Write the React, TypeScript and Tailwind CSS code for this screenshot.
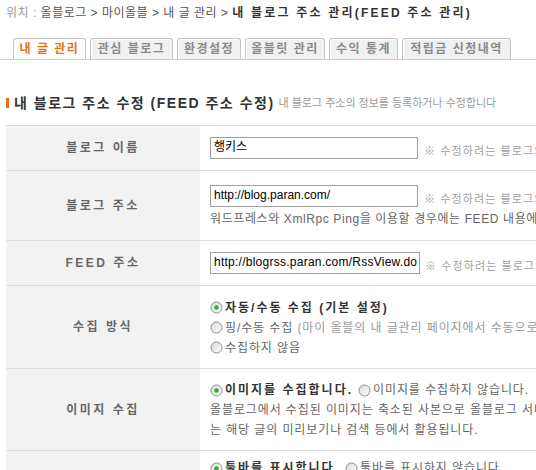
import React from "react";

function Radio({ checked }: { checked?: boolean }) {
  return (
    <svg width="13" height="13" viewBox="0 0 13 13" className="shrink-0 mr-[2px]">
      <defs>
        <linearGradient id="rg" x1="0" y1="0" x2="1" y2="1">
          <stop offset="0" stopColor="#d9d9d9" />
          <stop offset="1" stopColor="#ffffff" />
        </linearGradient>
      </defs>
      <circle cx="6.5" cy="6.5" r="5.5" fill="url(#rg)" stroke="#8d8d8d" strokeWidth="1" />
      {checked && <circle cx="6.5" cy="6.5" r="2.3" fill="#2eae2e" />}
    </svg>
  );
}

function Row({ label, h, children }: { label: string; h: string; children: React.ReactNode }) {
  return (
    <div className={`flex border-b border-[#dddddd] ${h}`}>
      <div className="w-[194px] shrink-0 bg-[#f2f2f2] flex items-center justify-center text-[12px] font-bold text-[#666] tracking-[2.5px]">
        {label}
      </div>
      <div className="flex-1 pl-[10px] flex flex-col justify-center">{children}</div>
    </div>
  );
}

const tabs = [
  { t: "내 글 관리", w: "w-[73px]", active: true },
  { t: "관심 블로그", w: "w-[83px]" },
  { t: "환경설정", w: "w-[64px]" },
  { t: "올블릿 관리", w: "w-[80px]" },
  { t: "수익 통계", w: "w-[69px]" },
  { t: "적립금 신청내역", w: "w-[109px]" },
];

export default function App() {
  return (
    <div className="w-[536px] h-[470px] overflow-hidden bg-white font-['Liberation_Sans','Noto_Sans_CJK_KR',sans-serif]">
      <div className="w-[900px]">
        <div className="pl-[6px] pt-[5px] h-[21px] leading-[16px] text-[12px] whitespace-nowrap tracking-[0.5px]">
          <span className="text-[#999]">위치 : </span>
          <span className="text-[#555]">올블로그 &gt; 마이올블 &gt; 내 글 관리 &gt; </span>
          <b className="text-[#333] tracking-[2.2px]">내 블로그 주소 관리(FEED 주소 관리)</b>
        </div>

        <div className="mt-[17px] flex items-end gap-[4px] pl-[13px] border-b border-[#cccccc] h-[22px]">
          {tabs.map((tb) => (
            <div
              key={tb.t}
              className={`${tb.w} h-[21px] border border-b-0 border-[#c6c6c6] rounded-t-[3px] flex items-center justify-center text-[12px] font-bold tracking-[1.5px] whitespace-nowrap ${
                tb.active
                  ? "bg-white text-[#e5740f]"
                  : "bg-[#f1f1f1] text-[#8a8a8a] shadow-[inset_1px_1px_0_#ffffff]"
              }`}
            >
              {tb.t}
            </div>
          ))}
        </div>

        <div className="mt-[34px] h-[18px] flex items-center pl-[6px] whitespace-nowrap">
          <div className="w-[3px] h-[10px] bg-[#f0661c]" />
          <span className="ml-[5px] text-[14px] font-bold text-[#333] tracking-[1.5px]">
            내 블로그 주소 수정 (FEED 주소 수정)
          </span>
          <span className="ml-[4px] text-[11px] text-[#9a9a9a] tracking-[0px]">
            내 블로그 주소의 정보를 등록하거나 수정합니다
          </span>
        </div>

        <div className="mt-[13px] ml-[6px] w-[860px] border-t border-[#dddddd] text-[12px] whitespace-nowrap tracking-[0.9px]">
          <Row label="블로그 이름" h="h-[45px]">
            <div className="flex items-end">
              <div className="w-[208px] h-[22px] border border-[#a0a0a0] bg-white px-[3px] leading-[18px] text-[12px] text-black tracking-[0px]">
                행키스
              </div>
              <span className="ml-[6px] text-[11px] text-[#a0a0a0] leading-[16px] tracking-[1.1px]">
                ※ 수정하려는 블로그의 이름을 입력하세요.
              </span>
            </div>
          </Row>
          <Row label="블로그 주소" h="h-[70px]">
            <div className="flex items-end">
              <div className="w-[208px] h-[22px] border border-[#a0a0a0] bg-white px-[3px] leading-[19px] text-[12px] text-black tracking-[0px]">
                http://blog.paran.com/
              </div>
              <span className="ml-[6px] text-[11px] text-[#a0a0a0] leading-[16px] tracking-[1.1px]">
                ※ 수정하려는 블로그의 주소를 입력하세요.
              </span>
            </div>
            <div className="mt-[4px] leading-[16px] text-[#666] tracking-[0.6px]">
              워드프레스와 XmlRpc Ping을 이용할 경우에는 FEED 내용에 블로그 주소가 포함되어야 합니다.
            </div>
          </Row>
          <Row label="FEED 주소" h="h-[45px]">
            <div className="flex items-end">
              <div className="w-[210px] h-[22px] border border-[#a0a0a0] bg-white px-[3px] leading-[19px] text-[12px] text-black overflow-hidden tracking-[0.25px]">
                http://blogrss.paran.com/RssView.do
              </div>
              <span className="ml-[5px] text-[11px] text-[#a0a0a0] leading-[16px] tracking-[1.1px]">
                ※ 수정하려는 블로그의 FEED 주소를 입력하세요.
              </span>
            </div>
          </Row>
          <Row label="수집 방식" h="h-[83px]">
            <div className="leading-[20px] pt-[1px]">
              <div className="flex items-center">
                <Radio checked />
                <b className="text-[#333] tracking-[2px]">자동/수동 수집 (기본 설정)</b>
              </div>
              <div className="flex items-center text-[#666]">
                <Radio />
                핑/수동 수집
                <span className="text-[#999]">&nbsp;(마이 올블의 내 글관리 페이지에서 수동으로 수집할 수 있습니다)</span>
              </div>
              <div className="flex items-center text-[#666]">
                <Radio />
                수집하지 않음
              </div>
            </div>
          </Row>
          <Row label="이미지 수집" h="h-[82px]">
            <div className="leading-[20px] pt-[1px] text-[#666]">
              <div className="flex items-center">
                <Radio checked />
                <b className="text-[#333] tracking-[2px]">이미지를 수집합니다.</b>
                <span className="ml-[5px]" />
                <Radio />
                이미지를 수집하지 않습니다.
              </div>
              <div>올블로그에서 수집된 이미지는 축소된 사본으로 올블로그 서버에 저장되며, 이미지</div>
              <div>는 해당 글의 미리보기나 검색 등에서 활용됩니다.</div>
            </div>
          </Row>
          <div className="flex h-[60px]">
            <div className="w-[194px] shrink-0 bg-[#f2f2f2]" />
            <div className="flex-1 pl-[10px] pt-[7px] leading-[20px] text-[#666]">
              <div className="flex items-center">
                <Radio checked />
                <b className="text-[#333] tracking-[2px]">툴바를 표시합니다.</b>
                <span className="ml-[5px]" />
                <Radio />
                툴바를 표시하지 않습니다.
              </div>
            </div>
          </div>
        </div>
      </div>
    </div>
  );
}
